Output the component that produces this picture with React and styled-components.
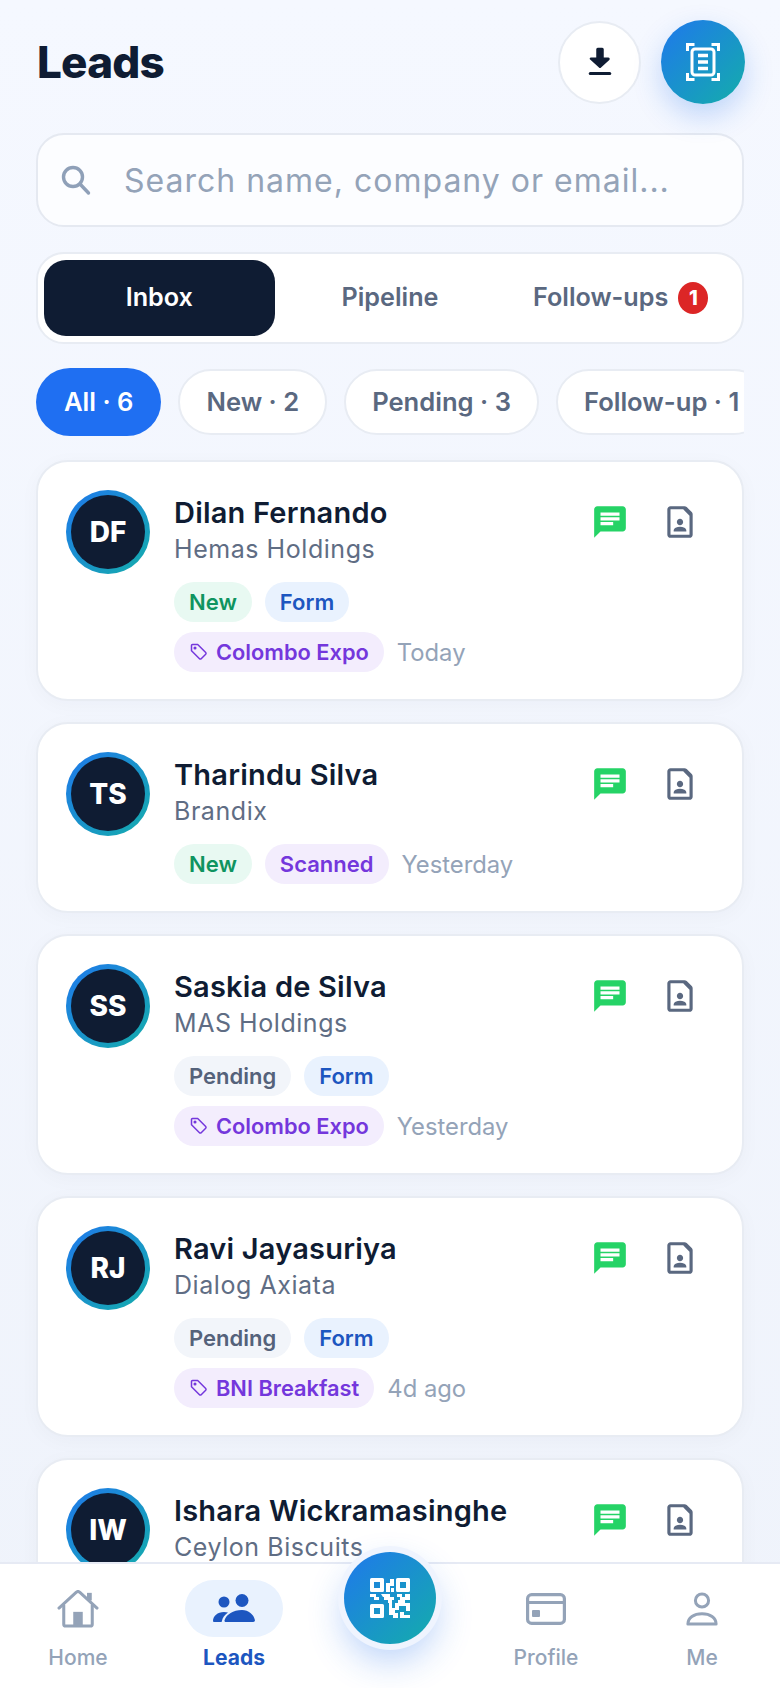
import React from "react";
import styled, { createGlobalStyle } from "styled-components";

const leads = [
  { initials: "DF", name: "Dilan Fernando", company: "Hemas Holdings", status: "New", source: "Form", event: "Colombo Expo", when: "Today" },
  { initials: "TS", name: "Tharindu Silva", company: "Brandix", status: "New", source: "Scanned", when: "Yesterday" },
  { initials: "SS", name: "Saskia de Silva", company: "MAS Holdings", status: "Pending", source: "Form", event: "Colombo Expo", when: "Yesterday" },
  { initials: "RJ", name: "Ravi Jayasuriya", company: "Dialog Axiata", status: "Pending", source: "Form", event: "BNI Breakfast", when: "4d ago" },
  { initials: "IW", name: "Ishara Wickramasinghe", company: "Ceylon Biscuits" },
];

const filters = ["All · 6", "New · 2", "Pending · 3", "Follow-up · 1"];

const tagColors = {
  New: ["#e8f9f2", "#0f9460"],
  Pending: ["#f2f5fa", "#55627a"],
  Form: ["#e9f2fe", "#1d56c0"],
  Scanned: ["#f3edfd", "#7437dc"],
};

const DownloadIcon = () => (
  <svg width="36" height="36" viewBox="0 0 24 24" fill="#0f1c33">
    <path d="M9.5 3.5a1 1 0 0 1 1-1h3a1 1 0 0 1 1 1V9h3c.9 0 1.3 1 .7 1.6l-5.5 5a1 1 0 0 1-1.4 0l-5.5-5C4.7 10 5.1 9 6 9h3.5z" />
    <rect x="4.5" y="18.6" width="15" height="2" rx="1" />
  </svg>
);

const ScanIcon = () => (
  <svg width="34" height="38" viewBox="0 0 34 38" fill="none" stroke="#fff" strokeWidth="3">
    <path d="M1.5 8V1.5H8.500M25.500 1.5h7V8M1.5 30v6.500H8.500M25.500 36.500h7V30" />
    <rect x="6" y="6" width="22" height="26" rx="3" />
    <path d="M12 12.500h10M12 19h10M12 25.500h10" strokeWidth="3.600" />
  </svg>
);

const SearchIcon = () => (
  <svg width="32" height="32" viewBox="0 0 32 32" fill="none" stroke="#8fa0b8" strokeWidth="3.400" strokeLinecap="round">
    <circle cx="13" cy="13" r="9.500" />
    <path d="M20 20l8.500 9" />
  </svg>
);

const ChatIcon = () => (
  <svg width="38" height="38" viewBox="0 0 24 24" fill="#25d366">
    <path d="M20 2H4c-1.100 0-2 .9-2 2v18l4-4h14c1.100 0 2-.9 2-2V4c0-1.100-.9-2-2-2zM6 9h12v2H6V9zm8 5H6v-2h8v2zm4-6H6V6h12v2z" />
  </svg>
);

const ContactIcon = () => (
  <svg width="38" height="38" viewBox="0 0 24 24" fill="#5a6880">
    <path d="M14 4l4 4v12H6V4h8m.83-2H6c-1.100 0-2 .9-2 2v16c0 1.100.9 2 2 2h12c1.100 0 2-.9 2-2V7.170c0-.53-.21-1.040-.59-1.410l-3.170-3.170c-.38-.38-.89-.59-1.410-.59zM12 14c1.100 0 2-.9 2-2s-.9-2-2-2-2 .9-2 2 .9 2 2 2zm4 3.430c0-.81-.48-1.530-1.220-1.850-.85-.37-1.790-.58-2.780-.58s-1.930.21-2.780.58C8.480 15.900 8 16.620 8 17.430V18h8v-.57z" />
  </svg>
);

const TagIcon = () => (
  <svg width="18" height="18" viewBox="0 0 18 18" fill="none" stroke="#7437dc" strokeWidth="1.500" strokeLinejoin="round">
    <path d="M1.500 2.500a1 1 0 0 1 1-1h5.200l8 8a1.200 1.200 0 0 1 0 1.700l-4.500 4.500a1.200 1.200 0 0 1-1.700 0l-8-8V2.500z" />
    <circle cx="5" cy="5" r="0.800" fill="#7437dc" />
  </svg>
);

const HomeIcon = () => (
  <svg width="42" height="38" viewBox="0 0 44 40" fill="none" stroke="#94a3b8" strokeWidth="3.200" strokeLinecap="round" strokeLinejoin="round">
    <path d="M2 19L20 2.500a3 3 0 0 1 4 0L42 19" />
    <path d="M34 11V3" strokeWidth="5" strokeLinecap="butt" />
    <path d="M7 16v20a2 2 0 0 0 2 2h26a2 2 0 0 0 2-2V16" />
    <rect x="17" y="23" width="10" height="15" fill="#94a3b8" stroke="none" />
  </svg>
);

const PeopleIcon = () => (
  <svg width="42" height="29" viewBox="0 0 42 29" fill="#1d56c0">
    <circle cx="11" cy="8" r="5.500" />
    <circle cx="29" cy="6.500" r="6.500" />
    <path d="M0 27c0-5 4.500-9 11-9 1.500 0 2.800.2 4 .6C11.500 21 9.500 24 8.800 27.400c-.1.400-.5.600-.9.600H1a1 1 0 0 1-1-1z" />
    <path d="M13 28c-1.200 0-1.800-.9-1.400-2C13.500 20.500 20 16 29 16c6.500 0 11.800 4.500 12.900 10 .2 1.100-.5 2-1.700 2H13z" />
  </svg>
);

const QrIcon = () => (
  <svg width="40" height="40" viewBox="0 0 40 40" fill="#fff">
    <path fillRule="evenodd" d="M0 1.500A1.500 1.500 0 0 1 1.500 0h11A1.500 1.500 0 0 1 14 1.500v11a1.500 1.500 0 0 1-1.500 1.500h-11A1.500 1.500 0 0 1 0 12.500v-11zM4 4v6h6V4H4z" />
    <path fillRule="evenodd" d="M26 1.500A1.500 1.500 0 0 1 27.500 0h11A1.500 1.500 0 0 1 40 1.500v11a1.500 1.500 0 0 1-1.500 1.500h-11a1.500 1.500 0 0 1-1.500-1.500v-11zM30 4v6h6V4h-6z" />
    <path fillRule="evenodd" d="M0 27.500A1.500 1.500 0 0 1 1.500 26h11a1.500 1.500 0 0 1 1.500 1.500v11a1.500 1.500 0 0 1-1.500 1.500h-11A1.500 1.500 0 0 1 0 38.500v-11zM4 30v6h6v-6H4z" />
    <path d="M20 1h4v4h-4zM16 5h8v3h-4v6h-4zM21 10h3v4h-3zM0 16h6v3h3v3H4v-3H0zM11 16h9v3h4v3h6v-3h-3v-3h5v3h3v-3h5v6h-5v3h5v8h-4v-5h-7v4h-4v-7h3v-3h-6v8h3v5h3v7h-5v-5h-4v-12h-1v-3h-4v-3h-1zM30 34h4v3h6v3h-10z" />
  </svg>
);

const CardIcon = () => (
  <svg width="40" height="32" viewBox="0 0 40 32" fill="none" stroke="#94a3b8" strokeWidth="3.200" strokeLinejoin="round">
    <rect x="1.600" y="1.600" width="36.800" height="28.800" rx="4" />
    <path d="M1.600 9.500h36.800" />
    <rect x="6" y="17" width="8" height="7" rx="1" fill="#94a3b8" stroke="none" />
  </svg>
);

const PersonIcon = () => (
  <svg width="32" height="34" viewBox="0 0 34 36" fill="none" stroke="#94a3b8" strokeWidth="3.200" strokeLinejoin="round">
    <circle cx="17" cy="9" r="7" />
    <path d="M2 34c0-7 6.500-11 15-11s15 4 15 11H2z" />
  </svg>
);

const navItems = [
  { label: "Home", icon: <HomeIcon /> },
  { label: "Leads", icon: <PeopleIcon />, active: true },
  { spacer: true, label: "qr" },
  { label: "Profile", icon: <CardIcon /> },
  { label: "Me", icon: <PersonIcon /> },
];

export default function App() {
  return (
    <>
      <GlobalStyle />
      <Page>
        <Main>
          <Header>
            <Title>Leads</Title>
            <HeaderActions>
              <RoundButton>
                <DownloadIcon />
              </RoundButton>
              <ScanButton>
                <ScanIcon />
              </ScanButton>
            </HeaderActions>
          </Header>

          <SearchBar>
            <SearchIcon />
            <SearchInput placeholder="Search name, company or email..." />
          </SearchBar>

          <Tabs>
            <Tab $active>Inbox</Tab>
            <Tab>Pipeline</Tab>
            <Tab>
              Follow-ups <Badge>1</Badge>
            </Tab>
          </Tabs>

          <Filters>
            {filters.map((f, i) => (
              <Filter key={f} $active={i === 0}>
                {f}
              </Filter>
            ))}
          </Filters>

          <LeadList>
            {leads.map((lead) => (
              <LeadCard key={lead.initials}>
                <AvatarRing>
                  <Avatar>{lead.initials}</Avatar>
                </AvatarRing>
                <LeadBody>
                  <LeadName>{lead.name}</LeadName>
                  <Company>{lead.company}</Company>
                  {lead.status && (
                    <TagRows>
                      <TagRow>
                        <Tag $kind={lead.status}>{lead.status}</Tag>
                        <Tag $kind={lead.source}>{lead.source}</Tag>
                        {!lead.event && <When>{lead.when}</When>}
                      </TagRow>
                      {lead.event && (
                        <TagRow>
                          <EventTag>
                            <TagIcon />
                            {lead.event}
                          </EventTag>
                          <When>{lead.when}</When>
                        </TagRow>
                      )}
                    </TagRows>
                  )}
                </LeadBody>
                <CardActions>
                  <IconButton>
                    <ChatIcon />
                  </IconButton>
                  <IconButton>
                    <ContactIcon />
                  </IconButton>
                </CardActions>
              </LeadCard>
            ))}
          </LeadList>
        </Main>

        <BottomNav>
          {navItems.map((item) =>
            item.spacer ? (
              <NavItem key={item.label} />
            ) : (
              <NavItem key={item.label}>
                <NavIcon $active={item.active}>{item.icon}</NavIcon>
                <NavLabel $active={item.active}>{item.label}</NavLabel>
              </NavItem>
            )
          )}
          <QrButton>
            <QrIcon />
          </QrButton>
        </BottomNav>
      </Page>
    </>
  );
}

const GlobalStyle = createGlobalStyle`
  * {
    box-sizing: border-box;
  }
  body {
    margin: 0;
    background: #f2f5fc;
    font-family: Inter, "Noto Sans", sans-serif;
  }
`;

const Page = styled.div`
  width: 780px;
  height: 1688px;
  display: flex;
  flex-direction: column;
  overflow: hidden;
  background: linear-gradient(180deg, #f5f8ff 0%, #eff3fb 100%);
`;

const Main = styled.div`
  flex: 1;
  min-height: 0;
  overflow: hidden;
  padding: 20px 36px 0;
`;

const Header = styled.div`
  height: 84px;
  display: flex;
  align-items: center;
  justify-content: space-between;
`;

const Title = styled.h1`
  margin: 0;
  padding-left: 1px;
  font-size: 44px;
  font-weight: 800;
  letter-spacing: -0.8px;
  color: #0f1c33;
`;

const HeaderActions = styled.div`
  display: flex;
  align-items: center;
  gap: 20px;
  margin-right: -1px;
`;

const RoundButton = styled.div`
  width: 83px;
  height: 83px;
  border-radius: 50%;
  background: #fff;
  border: 2px solid #e8ecf3;
  display: flex;
  align-items: center;
  justify-content: center;
`;

const ScanButton = styled.div`
  width: 84px;
  height: 84px;
  border-radius: 50%;
  background: linear-gradient(135deg, #1f78ec 0%, #14adab 100%);
  box-shadow: 0 12px 28px rgba(31, 110, 236, 0.25);
  display: flex;
  align-items: center;
  justify-content: center;
`;

const SearchBar = styled.div`
  margin-top: 29px;
  height: 94px;
  background: #fcfdff;
  border: 2px solid #e5e9f1;
  border-radius: 28px;
  display: flex;
  align-items: center;
  gap: 30px;
  padding: 0 22px;
`;

const SearchInput = styled.input`
  flex: 1;
  min-width: 0;
  border: 0;
  outline: 0;
  background: transparent;
  font-family: inherit;
  font-size: 32px;
  letter-spacing: 1px;
  color: #0f1c33;
  &::placeholder {
    color: #94a3b8;
    opacity: 1;
  }
`;

const Tabs = styled.div`
  margin-top: 25px;
  height: 92px;
  padding: 6px;
  background: #fff;
  border: 2px solid #e8ecf3;
  border-radius: 28px;
  display: grid;
  grid-template-columns: repeat(3, 1fr);
`;

const Tab = styled.div`
  padding-bottom: 2px;
  border-radius: 22px;
  display: flex;
  align-items: center;
  justify-content: center;
  gap: 10px;
  font-size: 25.2px;
  font-weight: 600;
  color: ${(p) => (p.$active ? "#fff" : "#5a6880")};
  background: ${(p) => (p.$active ? "#0f1c33" : "transparent")};
`;

const Badge = styled.span`
  width: 30px;
  height: 32px;
  margin-top: 2px;
  border-radius: 50%;
  background: #dc2626;
  color: #fff;
  font-size: 20px;
  font-weight: 800;
  display: flex;
  align-items: center;
  justify-content: center;
`;

const Filters = styled.div`
  margin-top: 24px;
  display: flex;
  align-items: center;
  gap: 17px;
  overflow: hidden;
`;

const Filter = styled.div`
  flex: none;
  height: ${(p) => (p.$active ? "68px" : "66px")};
  padding: 0 ${(p) => (p.$active ? "28px" : "26px")} 2px;
  border-radius: 34px;
  display: flex;
  align-items: center;
  font-size: 25.6px;
  font-weight: 600;
  background: ${(p) => (p.$active ? "#1f6ff2" : "#fff")};
  color: ${(p) => (p.$active ? "#fff" : "#5a6880")};
  border: ${(p) => (p.$active ? "0" : "2px solid #e8ecf3")};
`;

const LeadList = styled.div`
  margin-top: 24px;
  display: flex;
  flex-direction: column;
  gap: 21px;
`;

const LeadCard = styled.div`
  flex: none;
  padding: 28px 28px 27px;
  background: #fff;
  border: 2px solid #e8ecf3;
  border-radius: 32px;
  box-shadow: 0 4px 20px rgba(15, 28, 51, 0.03);
  display: flex;
  align-items: flex-start;
  gap: 24px;
`;

const AvatarRing = styled.div`
  flex: none;
  width: 84px;
  height: 84px;
  padding: 5px;
  border-radius: 50%;
  background: linear-gradient(135deg, #1f78ec 0%, #14adab 100%);
`;

const Avatar = styled.div`
  width: 100%;
  height: 100%;
  border-radius: 50%;
  background: #0f1c33;
  color: #fff;
  font-size: 28px;
  font-weight: 800;
  display: flex;
  align-items: center;
  justify-content: center;
`;

const LeadBody = styled.div`
  flex: 1;
  min-width: 0;
`;

const LeadName = styled.div`
  margin-top: 2px;
  height: 42px;
  line-height: 42px;
  font-size: 29px;
  font-weight: 600;
  letter-spacing: 0.2px;
  color: #0f1c33;
`;

const Company = styled.div`
  height: 31px;
  line-height: 31px;
  font-size: 25px;
  letter-spacing: 0.55px;
  color: #5f6d84;
`;

const TagRows = styled.div`
  margin-top: 17px;
  display: flex;
  flex-direction: column;
  gap: 10px;
`;

const TagRow = styled.div`
  display: flex;
  align-items: center;
  gap: 13px;
`;

const Tag = styled.span`
  height: 40px;
  padding: 0 15px;
  border-radius: 20px;
  display: inline-flex;
  align-items: center;
  font-size: 22px;
  font-weight: 600;
  background: ${(p) => tagColors[p.$kind][0]};
  color: ${(p) => tagColors[p.$kind][1]};
`;

const EventTag = styled.span`
  height: 40px;
  padding: 0 15px 0 16px;
  border-radius: 20px;
  display: inline-flex;
  align-items: center;
  gap: 8px;
  font-size: 21.8px;
  font-weight: 600;
  background: #f3edfd;
  color: #7437dc;
`;

const When = styled.span`
  font-size: 23.8px;
  color: #94a3b8;
`;

const CardActions = styled.div`
  flex: none;
  height: 64px;
  margin-right: 5px;
  display: flex;
  align-items: center;
  gap: 12px;
`;

const IconButton = styled.div`
  width: 58px;
  display: flex;
  justify-content: center;
`;

const BottomNav = styled.nav`
  flex: none;
  position: relative;
  height: 126px;
  background: #fff;
  border-top: 2px solid #e6eaf4;
  display: grid;
  grid-template-columns: repeat(5, 1fr);
`;

const NavItem = styled.div`
  padding-top: 16px;
  display: flex;
  flex-direction: column;
  align-items: center;
  gap: 8px;
`;

const NavIcon = styled.div`
  width: 98px;
  height: 57px;
  border-radius: 29px;
  display: flex;
  align-items: center;
  justify-content: center;
  background: ${(p) => (p.$active ? "#e9f2fe" : "transparent")};
`;

const NavLabel = styled.span`
  font-size: 21px;
  font-weight: ${(p) => (p.$active ? 700 : 500)};
  color: ${(p) => (p.$active ? "#1d56c0" : "#94a3b8")};
`;

const QrButton = styled.div`
  position: absolute;
  left: 50%;
  top: -12px;
  width: 92px;
  height: 92px;
  margin-left: -46px;
  border-radius: 50%;
  background: linear-gradient(135deg, #1f78ec 0%, #14adab 100%);
  box-shadow: 0 0 0 6px #eff4fe, 0 16px 36px rgba(31, 110, 236, 0.32);
  display: flex;
  align-items: center;
  justify-content: center;
`;
